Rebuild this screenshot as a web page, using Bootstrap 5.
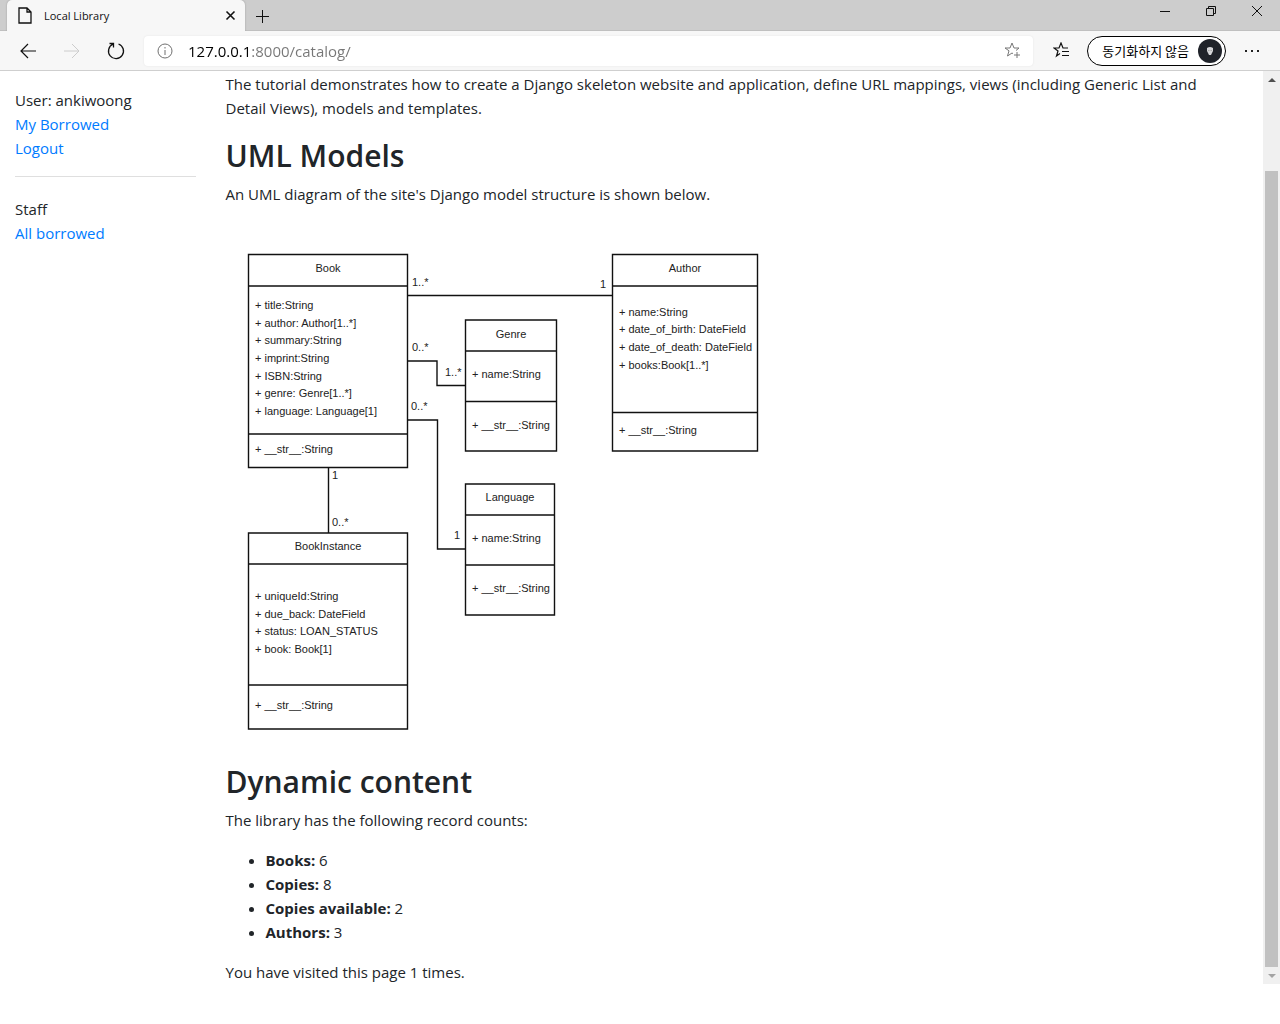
<!DOCTYPE html>
<html lang="en">
<head>
<meta charset="utf-8">
<meta name="viewport" content="width=device-width, initial-scale=1">
<title>Local Library</title>
<link href="https://cdn.jsdelivr.net/npm/bootstrap@5.3.0/dist/css/bootstrap.min.css" rel="stylesheet">
<style>
  body { font-family: "Open Sans", "Noto Sans", "Noto Sans CJK KR", sans-serif; font-size: 15px; line-height: 24px; color: #212529; background: #fff; }
  svg { display: block; flex: none; }
  svg.ico { fill: none; stroke: #111; }
  .tool-btn { background: none; border: 0; padding: 0; display: flex; align-items: center; justify-content: center; flex: none; }
  .tabstrip { background: #cdcdcd; height: 31px; padding-left: 7px; box-shadow: inset 0 -1px #c0c0c0; }
  .browser-tab { background: #f7f7f7; width: 238px; height: 31px; padding: 0 9px 0 11px; border-radius: 5px 5px 0 0; font-size: 11px; color: #111; box-shadow: 0 0 2px #999; clip-path: inset(0 -3px 0 -3px); margin-right: 6px; }
  .win-btn { width: 46px; height: 22px; }
  .toolbar { background: #f7f7f7; height: 40px; border-bottom: 1px solid #cfcfcf; padding: 0 4px 0 6px; }
  .nav-btn { width: 44px; height: 30px; }
  .address { background: #fff; height: 30px; border-radius: 4px; margin-left: 6px; padding: 0 12px 0 13px; box-shadow: 0 0 2px #e2e2e2; }
  .address input { border: 0; outline: 0; padding: 0; margin-left: 15px; min-width: 0; font-size: 15px; height: 28px; color: #767676;
    background: linear-gradient(90deg, #000 63px, #767676 63px); -webkit-background-clip: text; background-clip: text; -webkit-text-fill-color: transparent; }
  .profile { height: 30px; border: 1px solid #000; border-radius: 15px; background: #fff; padding: 0 3px 0 14px; gap: 9px; font-family: "Noto Sans CJK KR", sans-serif; font-size: 13px; color: #000; margin: 0 2px 0 13px; }
  .site { padding: 1px 15px 0; }
  .site .row { --bs-gutter-x: 30px; }
  .site .row > main { padding-right: 30px; }
  .site a { color: #007bff; text-decoration: none; }
  .side-nav { padding-top: 16px; }
  .side-nav ul { margin-bottom: 16px; }
  .side-nav hr { margin: 0 0 20px; border-top: 1px solid #dfdfdf; opacity: 1; }
  .site h2 { font-size: 30px; line-height: 40px; font-weight: 600; margin-bottom: 6px; }
  .site main ul { padding-left: 40px; }
  .uml { width: 555px; max-width: 100%; height: auto; font-family: "Liberation Sans", sans-serif; font-size: 11px; fill: #222; }
  .uml .ln { fill: none; stroke: #111; stroke-width: 1.4; }
  .scroll-track { width: 17px; background: #f0f0f0; flex: none; padding: 7px 2px 6px; }
  .scroll-thumb { background: #c1c1c1; width: 13px; margin: 89px 0 7px; }
</style>
<script src="https://cdn.jsdelivr.net/npm/bootstrap@5.3.0/dist/js/bootstrap.bundle.min.js"></script>
</head>
<body>
<header>
  <div class="tabstrip d-flex">
    <div class="browser-tab d-flex align-items-center">
      <svg class="ico" width="14" height="17" viewBox="0 0 14 17" stroke-width="1.3"><path d="M1 1h8l4 4v11H1zM9 1v4h4"/></svg>
      <span class="ms-2 ps-1 flex-grow-1">Local Library</span>
      <button class="tool-btn" aria-label="Close tab"><svg class="ico" width="11" height="11" viewBox="0 0 11 11" stroke-width="1.6"><path d="M1.500 1.500l8 8M9.500 1.500l-8 8"/></svg></button>
    </div>
    <button class="tool-btn px-1" aria-label="New tab"><svg class="ico" width="14" height="14" viewBox="0 0 14 14"><path d="M7.500 1v13M1 7.500h13"/></svg></button>
    <div class="d-flex ms-auto">
      <button class="tool-btn win-btn" aria-label="Minimize"><svg class="ico" width="12" height="12" viewBox="0 0 12 12"><path d="M1 6.500h10"/></svg></button>
      <button class="tool-btn win-btn" aria-label="Restore"><svg class="ico" width="12" height="12" viewBox="0 0 12 12"><path d="M1.500 3.500h7v7h-7zM3.500 3.500v-2h7v7h-2"/></svg></button>
      <button class="tool-btn win-btn" aria-label="Close"><svg class="ico" width="12" height="12" viewBox="0 0 12 12"><path d="M1 1l10 10M11 1L1 11"/></svg></button>
    </div>
  </div>
  <div class="toolbar d-flex align-items-center">
    <button class="tool-btn nav-btn" aria-label="Back"><svg class="ico" width="18" height="16" viewBox="0 0 18 16" stroke-width="1.2"><path d="M17 8H2M9 1L2 8l7 7"/></svg></button>
    <button class="tool-btn nav-btn" aria-label="Forward" disabled><svg class="ico" width="18" height="16" viewBox="0 0 18 16" style="stroke:#ccc"><path d="M1 8h15M9 1l7 7-7 7"/></svg></button>
    <button class="tool-btn nav-btn" aria-label="Refresh"><svg class="ico" width="18" height="18" viewBox="0 0 18 18" stroke-width="1.300"><path d="M11.500 2A7.500 7.500 0 1 1 6 2.200M2.500 1.500h4v4"/></svg></button>
    <div class="address d-flex align-items-center flex-grow-1">
      <svg width="16" height="16" viewBox="0 0 16 16" fill="none" stroke="#707070"><circle cx="8" cy="8" r="7"/><path d="M8 7v5M8 4v1.500"/></svg>
      <input class="flex-grow-1" type="text" aria-label="Address" value="127.0.0.1:8000/catalog/">
      <button class="tool-btn" aria-label="Add to favorites"><svg width="17" height="17" viewBox="0 0 17 17" fill="none" stroke="#777"><path d="M9 11.600L8 11l-4.500 3 1.500-5.200L1 6h5l2-5 2 5h5l-3 2.500M13 10v6M10 13h6"/></svg></button>
    </div>
    <button class="tool-btn ms-3 px-1" aria-label="Favorites"><svg class="ico" width="17" height="17" viewBox="0 0 17 17" stroke-width="1.200"><path d="M7 11.500L3.500 14 5 9 1 6h5l2-5 2 5h5M9 9.500h7M9 13.500h7"/></svg></button>
    <button class="tool-btn profile"><span>동기화하지 않음</span>
      <svg width="24" height="24" viewBox="0 0 24 24"><circle cx="12" cy="12" r="12" fill="#20232a"/><path d="M9 9q3-2 6 0v3l-2 4h-2l-2-4z" fill="#d5d5d8"/><path d="M10 11.500h1.500M12.500 11.500H14" stroke="#aaa"/></svg></button>
    <button class="tool-btn px-3 mx-n1" aria-label="Settings and more"><svg width="16" height="4" viewBox="0 0 16 4" fill="#222"><path d="M1 1h2v2H1zM7 1h2v2H7zM13 1h2v2h-2z"/></svg></button>
  </div>
</header>
<div class="d-flex">
  <div class="container-fluid site">
    <div class="row">
      <nav class="col-2 side-nav">
        <ul class="list-unstyled">
          <li>User: ankiwoong</li>
          <li><a href="#">My Borrowed</a></li>
          <li><a href="#">Logout</a></li>
        </ul>
        <hr>
        <ul class="list-unstyled">
          <li>Staff</li>
          <li><a href="#">All borrowed</a></li>
        </ul>
      </nav>
      <main class="col-10">
        <p>The tutorial demonstrates how to create a Django skeleton website and application, define URL mappings, views (including Generic List and Detail Views), models and templates.</p>
        <h2>UML Models</h2>
        <p>An UML diagram of the site's Django model structure is shown below.</p>
        <svg class="uml" width="555" height="540" viewBox="226 222 555 540" role="img" aria-label="UML class diagram">
          <g class="ln">
            <path d="M248.500 254.500h159v213h-159zM248.500 286h159M248.500 434h159"/>
            <path d="M612.500 254.500h145v196.500h-145zM612.500 286h145M612.500 412.500h145"/>
            <path d="M465.500 320h91v131h-91zM465.500 351h91M465.500 401.500h91"/>
            <path d="M465.500 484h89v131h-89zM465.500 515h89M465.500 565h89"/>
            <path d="M248.500 533h159v196h-159zM248.500 564h159M248.500 685h159"/>
            <path d="M407.500 295.500h205M407.500 361h29.500v24.500h28.500M407.500 420h30v129h28M328.500 467.500v65.500"/>
          </g>
          <g text-anchor="middle">
            <text x="328" y="272">Book</text>
            <text x="685" y="272">Author</text>
            <text x="511" y="338">Genre</text>
            <text x="510" y="501">Language</text>
            <text x="328" y="550">BookInstance</text>
          </g>
          <text x="255" y="309">+ title:String</text>
          <text x="255" y="327">+ author: Author[1..*]</text>
          <text x="255" y="344">+ summary:String</text>
          <text x="255" y="362">+ imprint:String</text>
          <text x="255" y="380">+ ISBN:String</text>
          <text x="255" y="397">+ genre: Genre[1..*]</text>
          <text x="255" y="415">+ language: Language[1]</text>
          <text x="255" y="453">+ __str__:String</text>
          <text x="619" y="316">+ name:String</text>
          <text x="619" y="333">+ date_of_birth: DateField</text>
          <text x="619" y="351">+ date_of_death: DateField</text>
          <text x="619" y="369">+ books:Book[1..*]</text>
          <text x="619" y="434">+ __str__:String</text>
          <text x="472" y="378">+ name:String</text>
          <text x="472" y="429">+ __str__:String</text>
          <text x="472" y="542">+ name:String</text>
          <text x="472" y="592">+ __str__:String</text>
          <text x="255" y="600">+ uniqueId:String</text>
          <text x="255" y="618">+ due_back: DateField</text>
          <text x="255" y="635">+ status: LOAN_STATUS</text>
          <text x="255" y="653">+ book: Book[1]</text>
          <text x="255" y="709">+ __str__:String</text>
          <text x="412" y="286">1..*</text>
          <text x="600" y="288">1</text>
          <text x="412" y="351">0..*</text>
          <text x="445" y="376">1..*</text>
          <text x="411" y="410">0..*</text>
          <text x="454" y="539">1</text>
          <text x="332" y="479">1</text>
          <text x="332" y="526">0..*</text>
        </svg>
        <h2>Dynamic content</h2>
        <p>The library has the following record counts:</p>
        <ul>
          <li><strong>Books:</strong> 6</li>
          <li><strong>Copies:</strong> 8</li>
          <li><strong>Copies available:</strong> 2</li>
          <li><strong>Authors:</strong> 3</li>
        </ul>
        <p class="mb-0">You have visited this page 1 times.</p>
      </main>
    </div>
  </div>
  <div class="scroll-track d-flex flex-column align-items-center" aria-hidden="true">
    <svg width="8" height="4" viewBox="0 0 8 4"><path d="M0 4l4-4 4 4z" fill="#505050"/></svg>
    <div class="scroll-thumb flex-grow-1"></div>
    <svg width="8" height="4" viewBox="0 0 8 4"><path d="M0 0l4 4 4-4z" fill="#a3a3a3"/></svg>
  </div>
</div>
</body>
</html>
